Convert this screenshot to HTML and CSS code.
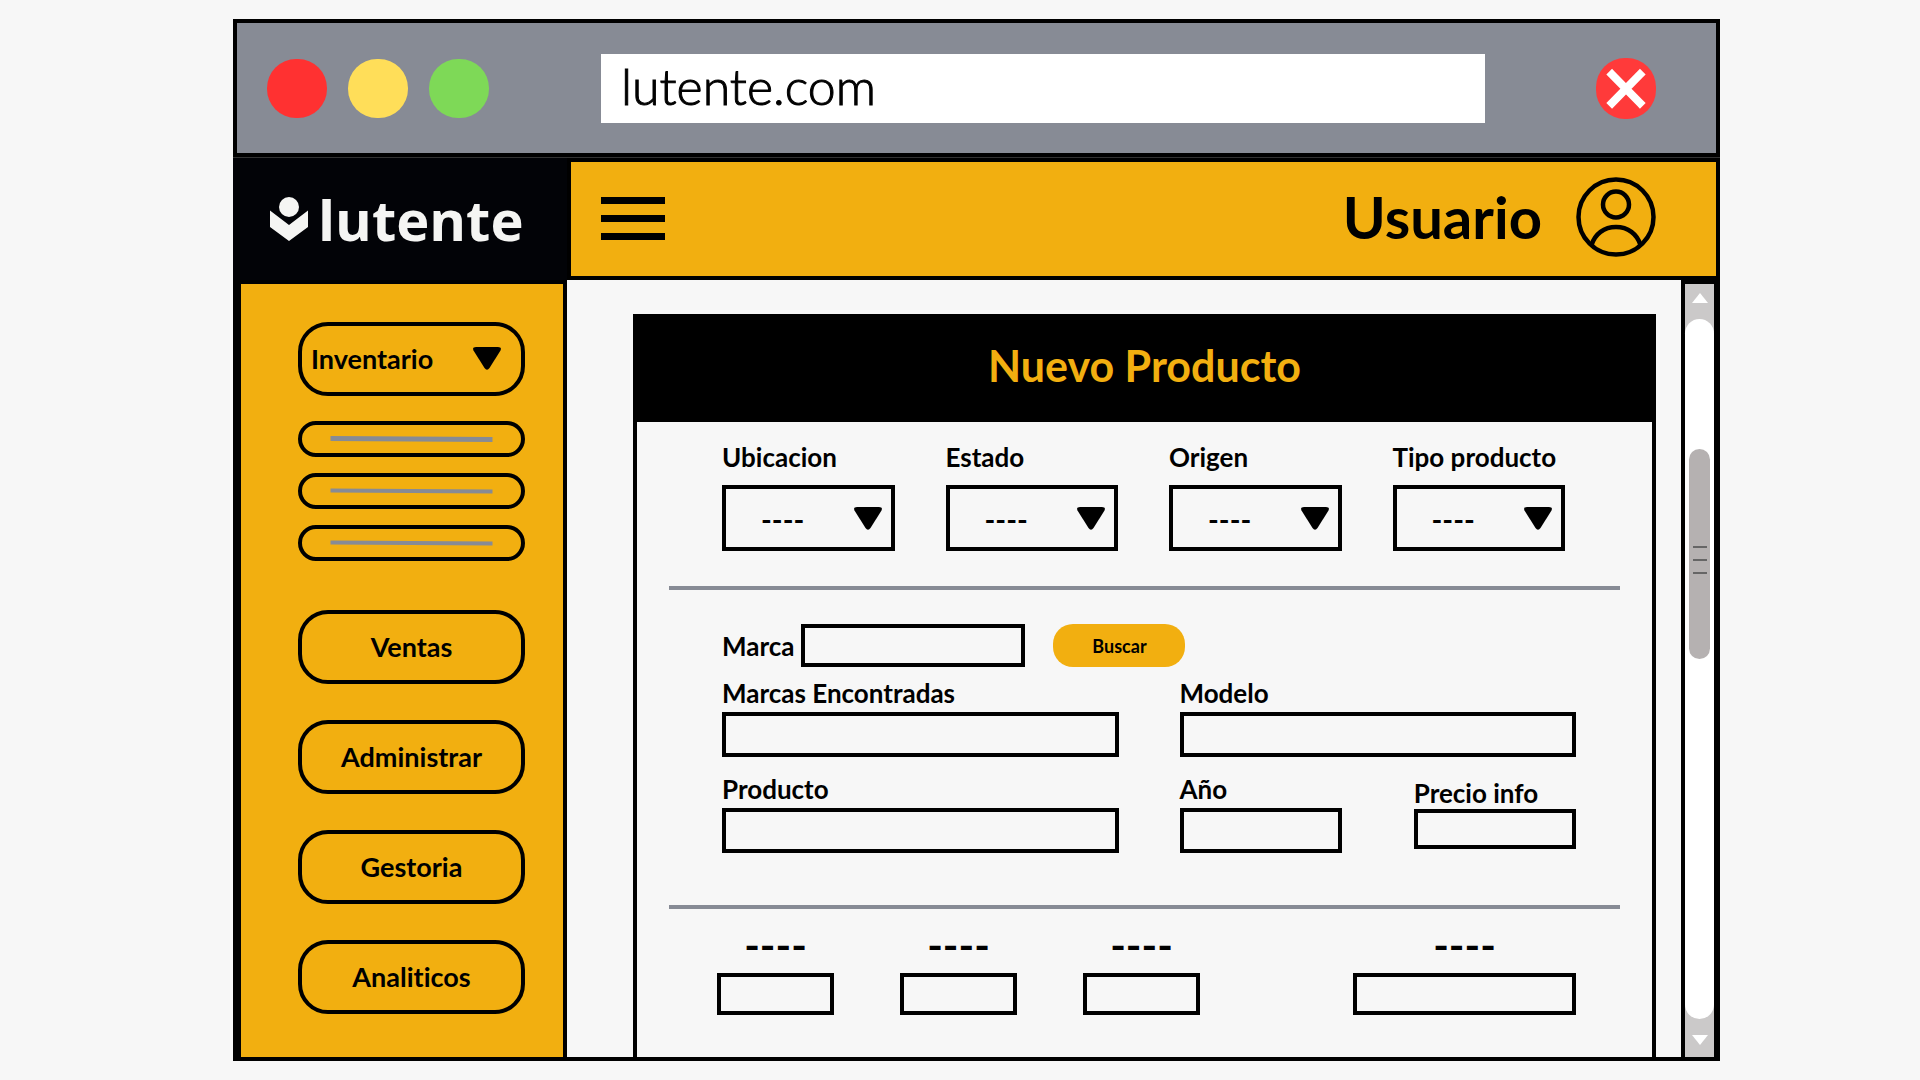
FILE: index.html
```html
<!DOCTYPE html>
<html lang="es">
<head>
<meta charset="utf-8">
<meta name="viewport" content="width=device-width, initial-scale=1">
<title>Lutente - Nuevo Producto</title>
<link rel="stylesheet" href="styles.css">
</head>
<body>
<svg class="defs" aria-hidden="true">
  <symbol id="caret" viewBox="0 0 28 23"><path d="M3 0H25Q29 0 27.500 3.500L16.500 21Q14 24.500 11.500 21L.5 3.500Q-1 0 3 0Z"/></symbol>
</svg>
<div class="window">
  <header class="browser-bar">
    <div class="lights"><span class="light red"></span><span class="light yellow"></span><span class="light green"></span></div>
    <input class="url" type="text" aria-label="Direccion" value="lutente.com">
    <button class="close" type="button" aria-label="Cerrar">
      <svg viewBox="0 0 60 61"><rect width="60" height="61" rx="29" fill="#ff3a3a"/><path d="M16 16.500L44 45M44 16.500L16 45" stroke="#fff" stroke-width="8" stroke-linecap="square" fill="none"/></svg>
    </button>
  </header>

  <div class="app-bar">
    <a class="brand" href="#">
      <svg viewBox="0 0 38 44" aria-hidden="true"><circle cx="19" cy="10" r="10"/><path d="M0 13.500L19 28L38 13.500V30L19 44L0 30Z"/></svg>
      <span>lutente</span>
    </a>
    <div class="toolbar">
      <button class="menu" type="button" aria-label="Menu"><span></span><span></span><span></span></button>
      <button class="user" type="button">Usuario
        <svg viewBox="0 0 80 80" aria-hidden="true"><g fill="none" stroke="#000" stroke-width="4.500"><circle cx="40" cy="40" r="37.500"/><circle cx="40" cy="27.500" r="13"/><path d="M15.500 68C19 57 28 50 40 50S61 57 64.500 68"/></g></svg>
      </button>
    </div>
  </div>

  <div class="body">
    <nav class="sidebar">
      <button class="nav-item nav-open" type="button">Inventario <svg class="caret"><use href="#caret"/></svg></button>
      <div class="subnav">
        <button class="sub-item" type="button" aria-label="Inventario 1"><svg viewBox="0 0 162 6"><path d="M0 2.500L162 3.500" stroke-width="5"/></svg></button>
        <button class="sub-item" type="button" aria-label="Inventario 2"><svg viewBox="0 0 162 6"><path d="M0 2.500L162 3.500" stroke-width="4"/></svg></button>
        <button class="sub-item" type="button" aria-label="Inventario 3"><svg viewBox="0 0 162 6"><path d="M0 2.500L162 3.500" stroke-width="4"/></svg></button>
      </div>
      <button class="nav-item" type="button">Ventas</button>
      <button class="nav-item" type="button">Administrar</button>
      <button class="nav-item" type="button">Gestoria</button>
      <button class="nav-item" type="button">Analiticos</button>
    </nav>

    <main class="content">
      <form class="card">
        <h1>Nuevo Producto</h1>
        <div class="filters">
          <div class="field"><label for="ubicacion">Ubicacion</label><div class="select"><select id="ubicacion"><option>----</option></select><svg class="caret"><use href="#caret"/></svg></div></div>
          <div class="field"><label for="estado">Estado</label><div class="select"><select id="estado"><option>----</option></select><svg class="caret"><use href="#caret"/></svg></div></div>
          <div class="field"><label for="origen">Origen</label><div class="select"><select id="origen"><option>----</option></select><svg class="caret"><use href="#caret"/></svg></div></div>
          <div class="field"><label for="tipo">Tipo producto</label><div class="select"><select id="tipo"><option>----</option></select><svg class="caret"><use href="#caret"/></svg></div></div>
        </div>
        <hr>
        <div class="search">
          <label for="marca">Marca</label>
          <input id="marca" type="text">
          <button class="search-button" type="button">Buscar</button>
        </div>
        <div class="details">
          <div class="field"><label for="marcas">Marcas Encontradas</label><input id="marcas" type="text"></div>
          <div class="field"><label for="modelo">Modelo</label><input id="modelo" type="text"></div>
          <div class="field"><label for="producto">Producto</label><input id="producto" type="text"></div>
          <div class="pair">
            <div class="field"><label for="anio">Año</label><input id="anio" type="text"></div>
            <div class="field compact"><label for="precio">Precio info</label><input id="precio" type="text"></div>
          </div>
        </div>
        <hr>
        <div class="extras">
          <div class="field"><label for="extra1">----</label><input id="extra1" type="text"></div>
          <div class="field"><label for="extra2">----</label><input id="extra2" type="text"></div>
          <div class="field"><label for="extra3">----</label><input id="extra3" type="text"></div>
          <div class="field wide"><label for="extra4">----</label><input id="extra4" type="text"></div>
        </div>
      </form>
    </main>

    <div class="scrollbar" aria-hidden="true">
      <svg viewBox="0 0 16 10"><path d="M8 0L16 10H0Z"/></svg>
      <div class="track"><div class="thumb"><span></span><span></span><span></span></div></div>
      <svg viewBox="0 0 16 10"><path d="M0 0H16L8 10Z"/></svg>
    </div>
  </div>
</div>
</body>
</html>
```
FILE: styles.css
```css
:root {
  --amber: #f2af10;
  --slate: #878b95;
  --paper: #f7f7f7;
  --line: 4px solid #000;
}

* { box-sizing: border-box; }

body {
  margin: 0;
  background: var(--paper);
  color: #000;
  font-family: Lato, "Open Sans", sans-serif;
  font-size: 26px;
  font-weight: 700;
  font-variant-ligatures: none;
}

button, input, select {
  margin: 0;
  padding: 0;
  border: 0;
  border-radius: 0;
  background: none;
  color: inherit;
  font: inherit;
  font-variant-ligatures: none;
}

button { cursor: pointer; }
svg { display: block; }
.defs { display: none; }

.window {
  display: flex;
  flex-direction: column;
  min-height: calc(100vh - 39px);
  margin: 19px 200px 20px 233px;
  border: var(--line);
  border-top: 0;
}

/* Browser chrome */
.browser-bar {
  display: flex;
  align-items: center;
  margin: 0 -4px;
  padding: 31px 60px 30px 30px;
  border: var(--line);
  background: var(--slate);
}

.lights { display: flex; gap: 21px; }
.light { width: 60px; height: 59px; border-radius: 29px; }
.red { background: #ff3131; }
.yellow { background: #ffde59; }
.green { background: #7ed957; }

.url {
  flex: 1;
  min-width: 0;
  height: 69px;
  margin: 0 111px 0 112px;
  padding: 0 20px 6px;
  background: #fff;
  font-size: 50px;
  font-weight: 300;
  -webkit-text-stroke: 1px #000;
}

.close svg { width: 60px; height: 61px; }

/* Application header */
.app-bar {
  display: flex;
  margin: 0 -4px;
  border-top: 1px solid #333;
}

.brand {
  display: flex;
  align-items: center;
  gap: 10px;
  width: 334px;
  padding-left: 37px;
  background: #020307;
  color: #f5f5f3;
  font-family: "Open Sans", sans-serif;
  font-size: 56px;
  line-height: 72px;
  text-decoration: none;
}

.brand svg { width: 38px; height: 44px; fill: currentColor; }

.toolbar {
  display: flex;
  flex: 1;
  align-items: center;
  justify-content: space-between;
  padding: 15px 60px 19px 30px;
  border: var(--line);
  background: var(--amber);
}

.menu { display: grid; gap: 11px; width: 64px; padding-top: 3px; }
.menu span { height: 7px; background: #000; }
.user { display: flex; align-items: center; gap: 34px; font-size: 58px; line-height: 66px; }
.user svg { width: 80px; height: 80px; }

.body { display: flex; flex: 1; }

/* Sidebar */
.sidebar {
  display: flex;
  flex-direction: column;
  gap: 36px;
  width: 330px;
  padding: 38px 38px 42px 57px;
  border: var(--line);
  border-bottom: 0;
  background: var(--amber);
}

.nav-item {
  height: 74px;
  padding-bottom: 2px;
  border: var(--line);
  border-radius: 30px;
  font-size: 27px;
}

.nav-open {
  display: flex;
  align-items: center;
  justify-content: space-between;
  padding: 0 20px 2px 9px;
}

.caret { width: 28px; height: 23px; }
.subnav { display: grid; gap: 16px; margin: -11px 0 13px; }

.sub-item {
  display: flex;
  align-items: center;
  height: 36px;
  padding: 0 28px;
  border: var(--line);
  border-radius: 18px;
}

.sub-item svg { width: 100%; height: 6px; stroke: var(--slate); }

/* Form */
.content { display: flex; flex: 1; min-width: 0; padding: 34px 25px 0 66px; }

.card { flex: 1; min-width: 0; padding-bottom: 42px; border: var(--line); border-bottom: 0; }

h1 {
  margin: 0;
  padding: 24px 0 32px;
  background: #000;
  color: var(--amber);
  font-size: 43px;
  line-height: 48px;
  text-align: center;
}

hr { height: 4px; margin: 0 32px; border: 0; background: var(--slate); }

.field { display: flex; flex-direction: column; gap: 4px; min-width: 0; }
label { line-height: 30px; }

input:not(.url), select { width: 100%; min-width: 0; height: 45px; border: var(--line); padding: 0 12px; }

.filters {
  display: grid;
  grid-template-columns: repeat(4, 1fr);
  gap: 51px;
  padding: 20px 87px 35px 85px;
}

.filters .field { gap: 13px; }
.select { display: grid; align-items: center; }
.select > * { grid-area: 1 / 1; }
.select .caret { justify-self: end; margin-right: 13px; pointer-events: none; }
select { appearance: none; height: 66px; padding: 0 35px; font-size: 29px; }

.search { display: flex; align-items: center; padding: 34px 85px 11px; }
.search #marca { width: 224px; height: 43px; margin: 0 28px 0 7px; }

.search-button {
  width: 132px;
  height: 43px;
  border-radius: 20px;
  background: var(--amber);
  font-size: 18px;
}

.details {
  display: grid;
  grid-template-columns: 1fr 1fr;
  gap: 17px 61px;
  padding: 0 76px 52px 85px;
}

.pair { display: grid; grid-template-columns: 1fr 1fr; gap: 72px; }
.compact { align-self: center; gap: 1px; }
.compact input:not(.url) { height: 40px; }

.extras {
  display: grid;
  grid-template-columns: 117fr 117fr 117fr 21fr 223fr;
  gap: 66px;
  padding: 16px 76px 0 80px;
}

.extras .field { gap: 8px; }
.extras label { font-size: 42px; line-height: 40px; text-align: center; }
.extras input:not(.url) { height: 42px; }
.extras .wide { grid-column: 5; }

/* Scrollbar */
.scrollbar {
  display: flex;
  flex-direction: column;
  align-items: center;
  gap: 16px;
  width: 35px;
  padding: 9px 0 12px;
  border: solid #000;
  border-width: 4px 2px 0 4px;
  background: #cbc9c9;
}

.scrollbar svg { width: 16px; height: 10px; fill: #fff; }
.track { flex: 1; align-self: stretch; padding: 130px 4px 0; border-radius: 15px; background: #fff; }

.thumb {
  display: grid;
  align-content: center;
  justify-content: center;
  gap: 11px;
  height: 210px;
  padding-top: 12px;
  border-radius: 11px;
  background: #b5b1b1;
}

.thumb span { width: 14px; height: 2px; background: #666; }
```
